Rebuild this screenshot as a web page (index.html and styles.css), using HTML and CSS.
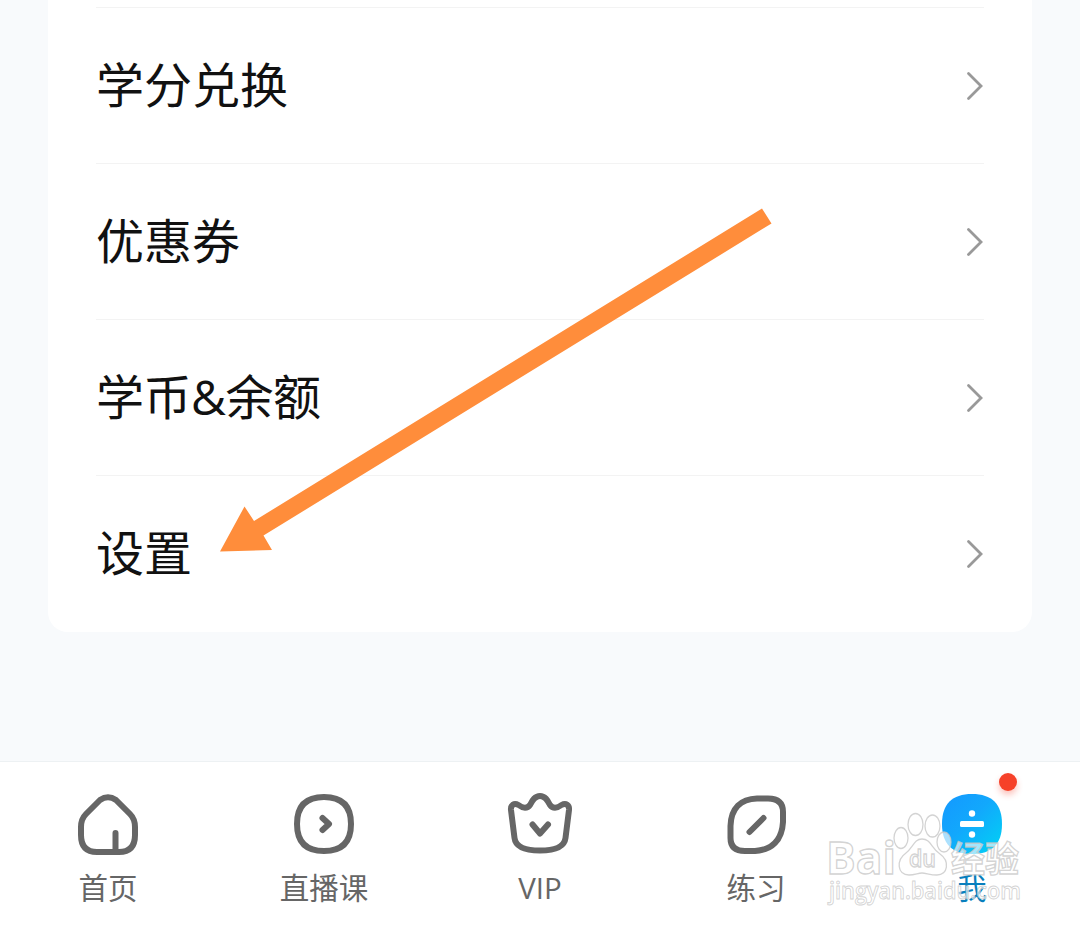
FILE: index.html
```html
<!DOCTYPE html>
<html lang="zh-CN">
<head>
<meta charset="utf-8">
<title>我</title>
<link rel="stylesheet" href="styles.css">
</head>
<body>
<div class="screen">
  <main class="content">
    <ul class="menu">
      <li class="row"><span>学分兑换</span><svg class="chevron" viewBox="0 0 18 30"><path d="M2.5 2.5 15 15 2.5 27.5"/></svg></li>
      <li class="row"><span>优惠券</span><svg class="chevron" viewBox="0 0 18 30"><path d="M2.5 2.5 15 15 2.5 27.5"/></svg></li>
      <li class="row"><span class="tight">学币&amp;余额</span><svg class="chevron" viewBox="0 0 18 30"><path d="M2.5 2.5 15 15 2.5 27.5"/></svg></li>
      <li class="row"><span>设置</span><svg class="chevron" viewBox="0 0 18 30"><path d="M2.5 2.5 15 15 2.5 27.5"/></svg></li>
    </ul>
  </main>
  <nav class="tabs">
    <a class="tab">
      <svg class="icon" viewBox="0 0 72 72"><path d="M28 12Q36 6.500 44 12L58 26Q63 31 63 39V47Q63 64 47 64H25Q9 64 9 47V39Q9 31 14 26ZM43.500 45V62"/></svg>
      <span>首页</span>
    </a>
    <a class="tab">
      <svg class="icon" viewBox="0 0 72 72"><path d="M36 9C54 9 63 18 63 36S54 63 36 63 9 54 9 36 18 9 36 9Z"/><path d="M34.500 30 41 36 34.500 42"/></svg>
      <span>直播课</span>
    </a>
    <a class="tab">
      <svg class="icon" viewBox="0 0 72 72"><path d="M14.500 17C19 20.500 23.500 20.500 26 17C28.500 12 31 8 36 8S43.500 12 46 17C48.500 20.500 53 20.500 57.500 17C62 14.500 65.500 17 65 22L61.500 50Q60 62.500 36 62.500T10.500 50L7 22C6.500 17 10 14.500 14.500 17Z"/><path d="M28.500 36.500 36 45.500 44 36.500"/></svg>
      <span>VIP</span>
    </a>
    <a class="tab">
      <svg class="icon" viewBox="0 0 72 72"><path d="M37 10.500H48Q63 10.500 63 24V34C62 52 52 62 35 63H25Q10.500 63 10.500 50V38C11 20 21 11 37 10.500Z"/><path d="M29.500 44 43.500 30"/></svg>
      <span>练习</span>
    </a>
    <a class="tab active">
      <svg class="icon" viewBox="0 0 72 72">
        <defs><linearGradient id="blue" x1="0" y1="0" x2="1" y2="1"><stop offset="0" stop-color="#1498ff"/><stop offset=".45" stop-color="#12a8fc"/><stop offset="1" stop-color="#00d4f4"/></linearGradient></defs>
        <path class="disc" d="M36 6C56 6 66 16 66 36S56 66 36 66 6 56 6 36 16 6 36 6Z"/>
        <rect class="sign" x="24" y="33" width="24" height="6" rx="1.500"/><circle class="sign" cx="36" cy="25.500" r="3.200"/><circle class="sign" cx="36" cy="46.500" r="3.200"/>
      </svg>
      <i class="badge"></i>
      <span>我</span>
    </a>
  </nav>
  <svg class="arrow" viewBox="0 0 1080 929"><path d="M220 551.500 244.500 506.500 254 521 762 208.500 771.500 223.500 263.500 535.500 272 550Z"/></svg>
  <svg class="watermark" viewBox="0 0 210 100">
    <g class="mark">
      <text class="brand" x="6" y="64" textLength="70" lengthAdjust="spacingAndGlyphs">Bai</text>
      <ellipse cx="81" cy="28" rx="7" ry="10.500"/><ellipse cx="95.500" cy="14.500" rx="7.500" ry="11"/><ellipse cx="112.500" cy="16" rx="7.500" ry="11"/><ellipse cx="124" cy="32" rx="7" ry="10"/>
      <path d="M102 29C94 29 93 38 86 43C76 50 77 65 89 65C95 65 98 63 102 63S110 65 117 65C128 65 130 51 120 44C111 38 111 29 102 29Z"/>
      <text class="du" x="89" y="57" textLength="27" lengthAdjust="spacingAndGlyphs">du</text>
      <text class="cn" x="131" y="61.500" textLength="68" lengthAdjust="spacingAndGlyphs">经验</text>
      <text class="url" x="9" y="88.500" textLength="192" lengthAdjust="spacingAndGlyphs">jingyan.baidu.com</text>
    </g>
  </svg>
</div>
</body>
</html>
```
FILE: styles.css
```css
* { box-sizing: border-box; }
body { margin: 0; font-family: "Open Sans", "Noto Sans CJK SC", sans-serif; }
.screen {
  position: relative;
  display: flex;
  flex-direction: column;
  height: 929px;
  overflow: hidden;
  background: #f8fafc;
}
.content { flex: 1; padding: 0 48px; }
.menu {
  margin: 0;
  padding: 7px 48px 0;
  height: 632px;
  list-style: none;
  background: #fff;
  border-radius: 0 0 20px 20px;
}
.row {
  display: flex;
  align-items: center;
  justify-content: space-between;
  height: 156px;
  border-top: 1px solid #f3f3f3;
  font-size: 48px;
  line-height: 72px;
  color: #111;
}
.row span { padding-bottom: 2px; }
.tight { letter-spacing: -.5px; }
.chevron {
  width: 18px;
  height: 30px;
  fill: none;
  stroke: #999;
  stroke-width: 2.8;
  stroke-linecap: round;
}
.tabs {
  display: flex;
  height: 168px;
  padding-top: 26px;
  background: #fff;
  border-top: 1px solid #edf1f3;
}
.tab {
  position: relative;
  flex: 1;
  display: flex;
  flex-direction: column;
  align-items: center;
  font-size: 29.5px;
  line-height: 40px;
  color: #666;
}
.tab span { margin-top: 8px; }
.icon {
  width: 72px;
  height: 72px;
  fill: none;
  stroke: #666;
  stroke-width: 6;
  stroke-linecap: round;
  stroke-linejoin: round;
}
.active { color: #087fbd; }
.disc { fill: url(#blue); stroke: none; }
.sign { fill: #fff; stroke: none; }
.badge {
  position: absolute;
  left: 135px;
  top: -15px;
  width: 18px;
  height: 18px;
  border-radius: 50%;
  background: #f64129;
  box-shadow: 0 4px 6px #f6412950;
}
.arrow {
  position: absolute;
  inset: 0;
  width: 1080px;
  height: 929px;
  fill: #ff8d3b;
}
.watermark {
  position: absolute;
  left: 820px;
  top: 810px;
  width: 210px;
  height: 100px;
}
.mark {
  fill: rgba(255, 255, 255, .65);
  stroke: rgba(200, 200, 200, .8);
  stroke-width: 1.3;
}
.brand { font-size: 45px; font-weight: bold; }
.du { font-size: 23px; font-weight: 600; }
.cn { font-size: 35px; font-weight: bold; }
.url { font-size: 23px; font-weight: 600; stroke-width: .9; }
```
